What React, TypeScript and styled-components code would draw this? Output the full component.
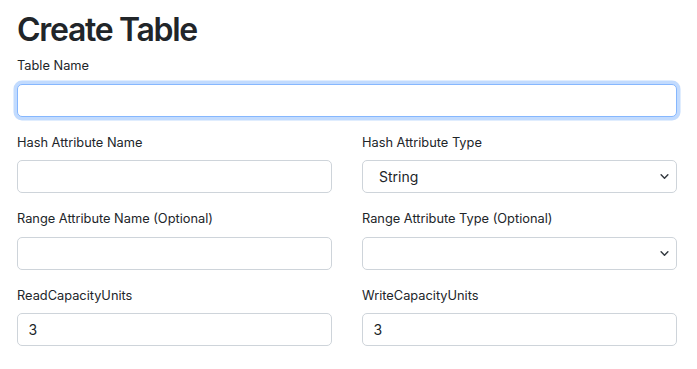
import * as React from 'react';
import styled, {createGlobalStyle} from 'styled-components';

const GlobalStyle = createGlobalStyle`
  body {
    margin: 0;
    background: #fff;
    color: #212529;
    font-family: Inter, "Liberation Sans", sans-serif;
  }
`;

const Page = styled.div`
  padding: 11px 20px 0 17px;
`;

const Title = styled.h1`
  margin: 0 0 7px;
  font-size: 32px;
  font-weight: 600;
  line-height: 1.2;
  letter-spacing: -1.3px;
`;

const Grid = styled.div`
  display: grid;
  grid-template-columns: 1fr 1fr;
  column-gap: 30px;
`;

const Field = styled.div<{ $wide?: boolean }>`
  grid-column: ${p => p.$wide ? '1 / -1' : 'auto'};
  margin-bottom: 16px;
`;

const Label = styled.label`
  display: block;
  margin-bottom: 8px;
  font-size: 12.8px;
  line-height: 19.5px;
`;

const controlCss = `
  display: block;
  box-sizing: border-box;
  width: 100%;
  height: 33px;
  padding: 5px 10.5px;
  font-family: Inter, "Liberation Sans", sans-serif;
  font-size: 14px;
  color: #212529;
  background-color: #fff;
  border: 1px solid #ced4da;
  border-radius: 5px;
  outline: none;
`;

const Input = styled.input<{ $focused?: boolean }>`
  ${controlCss}
  ${p => p.$focused ? `
    border-color: #86b7fe;
    box-shadow: 0 0 0 3.5px rgba(13, 110, 253, 0.25);
  ` : ''}
`;

const chevron = encodeURIComponent(
  "<svg xmlns='http://www.w3.org/2000/svg' viewBox='0 0 16 16'><path fill='none' stroke='#343a40' stroke-linecap='round' stroke-linejoin='round' stroke-width='2.6' d='m2 5 6 6 6-6'/></svg>"
);

const Select = styled.select`
  ${controlCss}
  appearance: none;
  padding-left: 16px;
  padding-right: 32px;
  background-image: url("data:image/svg+xml,${chevron}");
  background-repeat: no-repeat;
  background-position: right 6px center;
  background-size: 11px 9px;
`;

export default function App() {
  return (
    <Page>
      <GlobalStyle/>
      <Title>Create Table</Title>
      <Grid>
        <Field $wide>
          <Label htmlFor="tableName">Table Name</Label>
          <Input id="tableName" $focused/>
        </Field>
        <Field>
          <Label htmlFor="hashName">Hash Attribute Name</Label>
          <Input id="hashName"/>
        </Field>
        <Field>
          <Label htmlFor="hashType">Hash Attribute Type</Label>
          <Select id="hashType" defaultValue="S">
            <option value="S">String</option>
            <option value="N">Number</option>
            <option value="B">Binary</option>
          </Select>
        </Field>
        <Field>
          <Label htmlFor="rangeName">Range Attribute Name (Optional)</Label>
          <Input id="rangeName"/>
        </Field>
        <Field>
          <Label htmlFor="rangeType">Range Attribute Type (Optional)</Label>
          <Select id="rangeType" defaultValue="">
            <option value=""></option>
            <option value="S">String</option>
            <option value="N">Number</option>
            <option value="B">Binary</option>
          </Select>
        </Field>
        <Field>
          <Label htmlFor="rcu">ReadCapacityUnits</Label>
          <Input id="rcu" defaultValue="3"/>
        </Field>
        <Field>
          <Label htmlFor="wcu">WriteCapacityUnits</Label>
          <Input id="wcu" defaultValue="3"/>
        </Field>
      </Grid>
    </Page>
  );
}
